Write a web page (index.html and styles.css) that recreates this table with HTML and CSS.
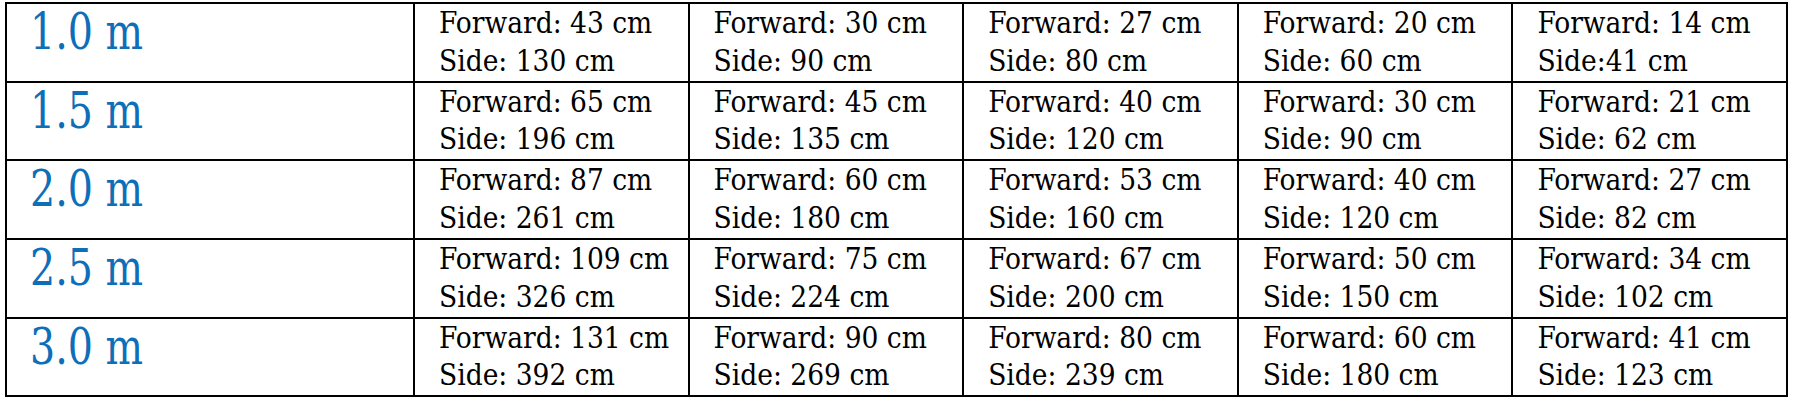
FILE: index.html
```html
<!DOCTYPE html>
<html>
<head>
<meta charset="utf-8">
<link rel="stylesheet" href="styles.css">
</head>
<body>
<table class="grid">
  <tr>
    <th class="height"><span class="label">1.0 m</span></th>
    <td>Forward: 43 cm<br>Side: 130 cm</td>
    <td>Forward: 30 cm<br>Side: 90 cm</td>
    <td>Forward: 27 cm<br>Side: 80 cm</td>
    <td>Forward: 20 cm<br>Side: 60 cm</td>
    <td>Forward: 14 cm<br>Side:41 cm</td>
  </tr>
  <tr>
    <th class="height"><span class="label">1.5 m</span></th>
    <td>Forward: 65 cm<br>Side: 196 cm</td>
    <td>Forward: 45 cm<br>Side: 135 cm</td>
    <td>Forward: 40 cm<br>Side: 120 cm</td>
    <td>Forward: 30 cm<br>Side: 90 cm</td>
    <td>Forward: 21 cm<br>Side: 62 cm</td>
  </tr>
  <tr>
    <th class="height"><span class="label">2.0 m</span></th>
    <td>Forward: 87 cm<br>Side: 261 cm</td>
    <td>Forward: 60 cm<br>Side: 180 cm</td>
    <td>Forward: 53 cm<br>Side: 160 cm</td>
    <td>Forward: 40 cm<br>Side: 120 cm</td>
    <td>Forward: 27 cm<br>Side: 82 cm</td>
  </tr>
  <tr>
    <th class="height"><span class="label">2.5 m</span></th>
    <td>Forward: 109 cm<br>Side: 326 cm</td>
    <td>Forward: 75 cm<br>Side: 224 cm</td>
    <td>Forward: 67 cm<br>Side: 200 cm</td>
    <td>Forward: 50 cm<br>Side: 150 cm</td>
    <td>Forward: 34 cm<br>Side: 102 cm</td>
  </tr>
  <tr>
    <th class="height"><span class="label">3.0 m</span></th>
    <td>Forward: 131 cm<br>Side: 392 cm</td>
    <td>Forward: 90 cm<br>Side: 269 cm</td>
    <td>Forward: 80 cm<br>Side: 239 cm</td>
    <td>Forward: 60 cm<br>Side: 180 cm</td>
    <td>Forward: 41 cm<br>Side: 123 cm</td>
  </tr>
</table>
</body>
</html>
```
FILE: styles.css
```css
html, body {
  margin: 0;
  padding: 0;
  background: #ffffff;
}

body {
  padding: 2px 0 0 5px;
  font-family: "DejaVu Serif Condensed", "DejaVu Serif", serif;
  font-stretch: condensed;
  color: #000;
}

.grid {
  border-collapse: collapse;
  border: 2px solid #000;
  width: 1781px;
  table-layout: fixed;
}

.grid th,
.grid td {
  box-sizing: border-box;
  border: 2px solid #000;
  vertical-align: top;
  text-align: left;
  padding: 1px 0 0 24px;
}

.grid td {
  width: 274.6px;
  font-size: 29.5px;
  line-height: 37.5px;
  font-weight: normal;
  height: 78.7px;
}

.grid th {
  width: 408px;
  font-weight: normal;
  padding-left: 23px;
}

.label {
  display: inline-block;
  font-size: 50px;
  line-height: 54px;
  color: #0e6eb8;
  transform: scaleX(0.88);
  transform-origin: left center;
}
```
